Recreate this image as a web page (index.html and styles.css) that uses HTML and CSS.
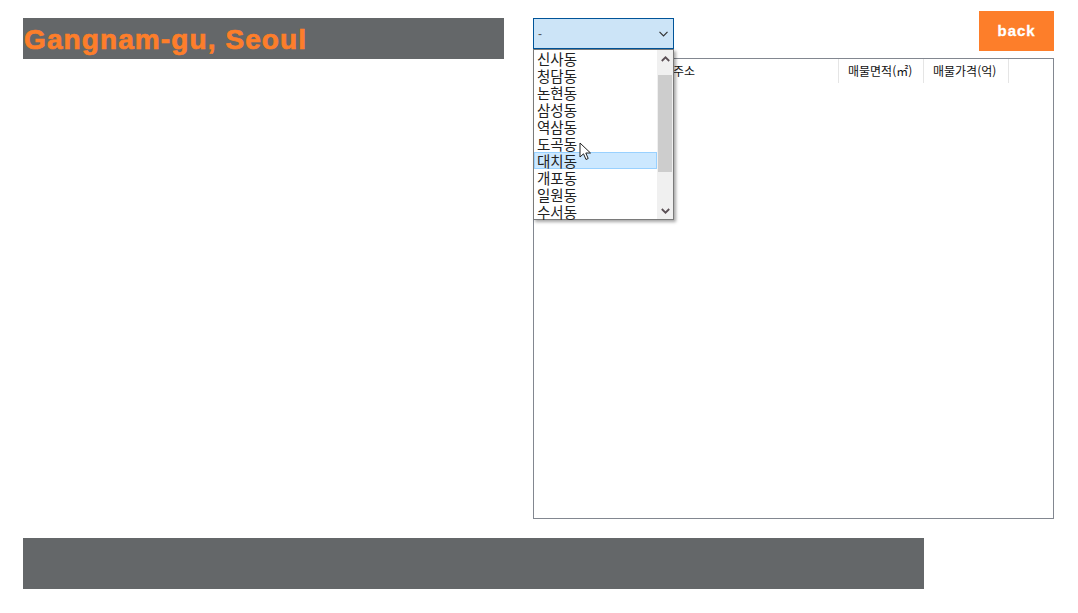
FILE: index.html
```html
<!DOCTYPE html>
<html lang="ko">
<head>
<meta charset="utf-8">
<title>Gangnam-gu, Seoul</title>
<link rel="stylesheet" href="styles.css">
</head>
<body>
<div class="page">
  <div class="main">
    <div class="left">
      <div class="titlebar"><h1 class="title">Gangnam-gu, Seoul</h1></div>
    </div>
    <div class="right">
      <div class="toprow">
        <div class="selectwrap">
          <div class="select">
            <span class="selval">-</span>
            <svg class="chev" width="9" height="6" viewBox="0 0 9 6"><path d="M0.5 0.8 L4.5 4.8 L8.5 0.8" fill="none" stroke="#333" stroke-width="1.2"/></svg>
          </div>
          <div class="list">
            <ul class="items">
              <li>신사동</li>
              <li>청담동</li>
              <li>논현동</li>
              <li>삼성동</li>
              <li>역삼동</li>
              <li>도곡동</li>
              <li class="hl">대치동</li>
              <li>개포동</li>
              <li>일원동</li>
              <li>수서동</li>
            </ul>
            <div class="scroll">
              <div class="sbtn"><svg width="9" height="6" viewBox="0 0 9 6"><path d="M0.8 5 L4.5 1.3 L8.2 5" fill="none" stroke="#5a4f55" stroke-width="1.8"/></svg></div>
              <div class="track"><div class="thumb"></div></div>
              <div class="sbtn"><svg width="9" height="6" viewBox="0 0 9 6"><path d="M0.8 1 L4.5 4.7 L8.2 1" fill="none" stroke="#5a4f55" stroke-width="1.8"/></svg></div>
            </div>
            <svg class="cursor" width="14" height="20" viewBox="0 0 14 20"><path d="M1 1 L1 15 L4.5 11.8 L7 17.5 L9.2 16.5 L6.8 11 L11.5 11 Z" fill="#fff" stroke="#222" stroke-width="1"/></svg>
          </div>
        </div>
        <button class="back">back</button>
      </div>
      <div class="tablebox">
        <div class="thead">
          <div class="th c0"></div>
          <div class="th c1">주소</div>
          <div class="th c2">매물면적(㎡)</div>
          <div class="th c3">매물가격(억)</div>
        </div>
      </div>
    </div>
  </div>
  <div class="footer"></div>
</div>
</body>
</html>
```

FILE: styles.css
```css
* { box-sizing: border-box; }
html, body { margin: 0; padding: 0; background: #fff; }
body { font-family: "Liberation Sans", Arial, "Noto Sans CJK KR", sans-serif; }
.page { padding: 11px 0 0 23px; width: 1078px; height: 613px; }
.main { display: flex; gap: 29px; }
.left { width: 481px; padding-top: 7px; }
.titlebar { background: #646769; height: 41px; display: flex; align-items: center; }
.title { margin: 0; padding-left: 1px; font-size: 28px; font-weight: bold; color: #fd7e2a; letter-spacing: 1.1px; -webkit-text-stroke: 0.7px #fd7e2a; line-height: 1; padding-top: 2px; }
.right { width: 521px; display: flex; flex-direction: column; }
.toprow { display: flex; justify-content: space-between; align-items: flex-start; height: 47px; }
.selectwrap { position: relative; margin-top: 7px; width: 141px; }
.select { height: 31px; background: #cce4f7; border: 1px solid #005499; display: flex; align-items: center; justify-content: space-between; padding: 0 5px 0 4px; }
.selval { font-size: 12px; color: #555; }
.chev { margin-top: 1px; }
.list { position: absolute; top: 31px; left: 0; width: 141px; height: 171px; background: #fff; border: 1px solid #7a7a7a; box-shadow: 2px 2px 3px rgba(0,0,0,0.35); display: flex; z-index: 5; }
.items { list-style: none; margin: 0; padding: 0; flex: 1; }
.items li { height: 17px; line-height: 15px; font-family: "Noto Sans CJK KR", "Liberation Sans", sans-serif; font-size: 14.5px; color: #222; padding-left: 2px; border: 1px solid transparent; }
.items li.hl { background: #cce8ff; border-color: #99d1ff; }
.scroll { width: 16px; background: #f0f0f0; display: flex; flex-direction: column; }
.sbtn { height: 17px; display: flex; align-items: center; justify-content: center; }
.track { flex: 1; padding-top: 8px; }
.thumb { height: 97px; background: #cdcdcd; margin: 0 1px; }
.cursor { position: absolute; left: 45px; top: 92px; }
.back { width: 75px; height: 40px; background: #fd7e2a; border: none; color: #fff; font-family: "Liberation Sans", Arial, sans-serif; font-weight: bold; font-size: 15px; letter-spacing: 0.9px; padding: 0 0 2px; -webkit-text-stroke: 0.3px #fff; }
.tablebox { height: 461px; border: 1px solid #828790; }
.thead { display: flex; height: 24px; }
.th { font-family: "Noto Sans CJK KR", "Liberation Sans", sans-serif; font-size: 12px; color: #111; border-right: 1px solid #e5e5e5; padding-left: 9px; line-height: 24px; }
.c0 { width: 136px; }
.c1 { width: 169px; padding-left: 3px; }
.c2 { width: 85px; }
.c3 { width: 85px; }
.footer { margin-top: 19px; width: 901px; height: 51px; background: #646769; }
```
